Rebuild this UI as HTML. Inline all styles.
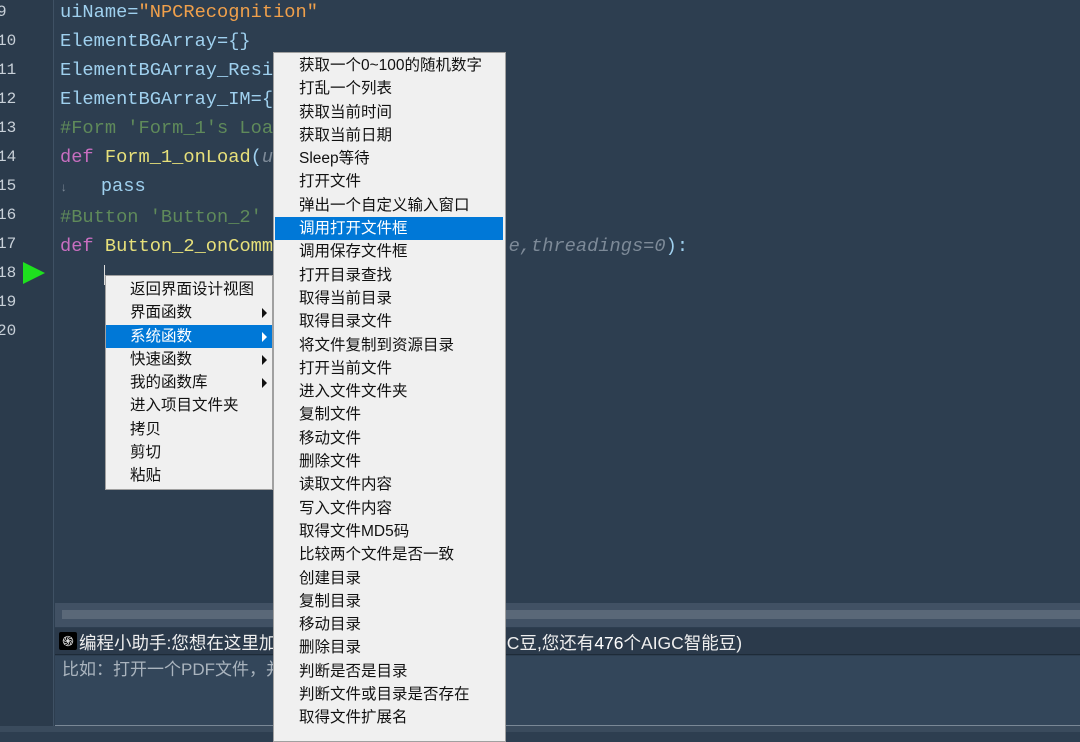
<!DOCTYPE html>
<html><head><meta charset="utf-8"><style>
*{margin:0;padding:0;box-sizing:border-box}
body{width:1080px;height:732px;overflow:hidden;background:#2d3e50;position:relative;font-family:"Liberation Sans","Noto Sans CJK SC",sans-serif}
.gut{position:absolute;left:0;top:0;width:54px;height:732px;background:#2b3b4c;border-right:1px solid #3f5164}
.ln{position:absolute;left:-3px;font:16px "Liberation Mono",monospace;color:#c8d0d8}
.code{position:absolute;left:60px;font:18.7px/29px "Liberation Mono","DejaVu Sans Mono",monospace;color:#9fd0ee;white-space:pre}
.s{color:#f0a04b}.c{color:#5f8a5a}.k{color:#c86ec0}.f{color:#e7e07a}.i{color:#7d8a98;font-style:italic}
.menu{position:absolute;background:#f0f0f0;border:1px solid #a0a0a0;font-size:15.5px;color:#111}
.menu div{height:23.3px;line-height:23.3px;padding-left:24px;position:relative}
.menu .h{background:#0078d7;color:#fff}
.ar{position:absolute;right:5px;top:7px;width:0;height:0;border-top:5px solid transparent;border-bottom:5px solid transparent;border-left:5px solid #111}
.h .ar{border-left-color:#fff}
</style></head><body>
<div class="gut"></div>
<div class="ln" style="top:3px">9</div>
<div class="ln" style="top:32px">10</div>
<div class="ln" style="top:61px">11</div>
<div class="ln" style="top:90px">12</div>
<div class="ln" style="top:119px">13</div>
<div class="ln" style="top:148px">14</div>
<div class="ln" style="top:177px">15</div>
<div class="ln" style="top:206px">16</div>
<div class="ln" style="top:235px">17</div>
<div class="ln" style="top:264px">18</div>
<div class="ln" style="top:293px">19</div>
<div class="ln" style="top:322px">20</div>
<svg style="position:absolute;left:22px;top:261px" width="24" height="24"><polygon points="1,1 23,12 1,23" fill="#1ee01e"/></svg>
<div class="code" style="top:-2px">uiName=<span class="s">"NPCRecognition"</span>
ElementBGArray={}
ElementBGArray_Resi
ElementBGArray_IM={
<span class="c">#Form 'Form_1's Loa</span>
<span class="k">def</span> <span class="f">Form_1_onLoad</span>(<span class="i">u</span>
<span class="i" style="font-size:12px">↓</span>   pass
<span class="c">#Button 'Button_2'</span>
<span class="k">def</span> <span class="f">Button_2_onComm</span>                     <span class="i">e,threadings=0</span>):
</div>
<div style="position:absolute;left:104px;top:265px;width:1px;height:20px;background:#ddd"></div>
<div style="position:absolute;left:55px;top:603px;width:1025px;height:24px;background:#415164"></div>
<div style="position:absolute;left:62px;top:610px;width:1018px;height:9px;background:#5a6878"></div>
<div style="position:absolute;left:55px;top:628px;width:1025px;height:27px;background:#2b3a4b;border-bottom:1px solid #1e2b38"></div>
<div style="position:absolute;left:59px;top:632px;width:18px;height:18px;background:#000;border-radius:2px;color:#fff;font-size:14px;line-height:18px;text-align:center">֍</div>
<div style="position:absolute;left:79px;top:630px;font-size:17.5px;color:#eee;white-space:nowrap">编程小助手:您想在这里加入什么代码?(每次消耗1个AIGC豆,您还有<b style="font-weight:normal;color:#fff">476</b>个AIGC智能豆)</div>
<div style="position:absolute;left:55px;top:656px;width:1025px;height:70px;background:#33465a;border-bottom:1px solid #7a8896"></div>
<div style="position:absolute;left:62px;top:655px;font-size:17px;color:#aab4be">比如：打开一个PDF文件，并显示</div>
<div style="position:absolute;left:0;top:726px;width:1080px;height:6px;background:#3a4b5d"></div>
<div class="menu" style="left:105px;top:275px;width:168px;height:215px;padding-top:2px">
<div>返回界面设计视图</div><div>界面函数<span class="ar"></span></div><div class="h">系统函数<span class="ar"></span></div><div>快速函数<span class="ar"></span></div><div>我的函数库<span class="ar"></span></div><div>进入项目文件夹</div><div>拷贝</div><div>剪切</div><div>粘贴</div>
</div>
<div class="menu" style="left:273px;top:52px;width:233px;height:690px;padding:1px 2px 0 1px">
<div>获取一个0~100的随机数字</div><div>打乱一个列表</div><div>获取当前时间</div><div>获取当前日期</div><div>Sleep等待</div><div>打开文件</div><div>弹出一个自定义输入窗口</div><div class="h">调用打开文件框</div><div>调用保存文件框</div><div>打开目录查找</div><div>取得当前目录</div><div>取得目录文件</div><div>将文件复制到资源目录</div><div>打开当前文件</div><div>进入文件文件夹</div><div>复制文件</div><div>移动文件</div><div>删除文件</div><div>读取文件内容</div><div>写入文件内容</div><div>取得文件MD5码</div><div>比较两个文件是否一致</div><div>创建目录</div><div>复制目录</div><div>移动目录</div><div>删除目录</div><div>判断是否是目录</div><div>判断文件或目录是否存在</div><div>取得文件扩展名</div>
</div>
</body></html>
